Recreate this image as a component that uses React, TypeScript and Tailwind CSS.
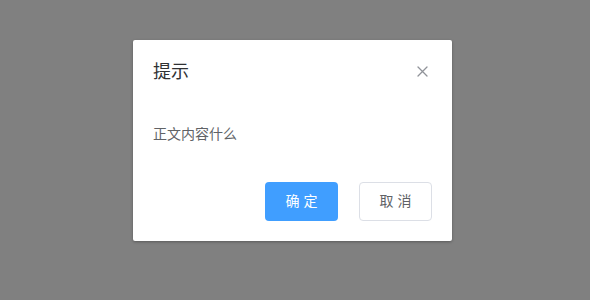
import React from "react";

export default function App() {
  return (
    <div
      className="w-[590px] h-[300px] bg-[#808080] pl-[133px] pt-[40px]"
      style={{ fontFamily: '"Liberation Sans", "Noto Sans CJK SC", sans-serif' }}
    >
      {/* Dialog */}
      <div className="w-[319px] h-[201px] bg-white rounded-[2px] shadow-[0_1px_3px_rgba(0,0,0,0.3)] flex flex-col">
        {/* Header */}
        <div className="flex items-center justify-between pt-[20px] px-[20px] pb-[10px]">
          <span className="text-[18px] leading-[24px] text-[#303133]">提示</span>
          <button className="flex items-center justify-center text-[#909399] mr-[4px] mt-[-1px]">
            <svg width="11" height="11" viewBox="0 0 11 11" fill="none">
              <path d="M1 1L10 10M10 1L1 10" stroke="currentColor" strokeWidth="1.3" strokeLinecap="round" />
            </svg>
          </button>
        </div>

        {/* Body */}
        <div className="px-[20px] pt-[30px] text-[14px] leading-[21px] text-[#606266]">
          正文内容什么
        </div>

        {/* Footer */}
        <div className="mt-auto flex justify-end gap-[21px] pr-[20px] pb-[20px]">
          <button className="w-[73px] h-[39px] rounded-[4px] bg-[#409eff] text-white text-[14px]">
            确 定
          </button>
          <button className="w-[73px] h-[39px] rounded-[4px] bg-white border border-[#dcdfe6] text-[#606266] text-[14px]">
            取 消
          </button>
        </div>
      </div>
    </div>
  );
}
